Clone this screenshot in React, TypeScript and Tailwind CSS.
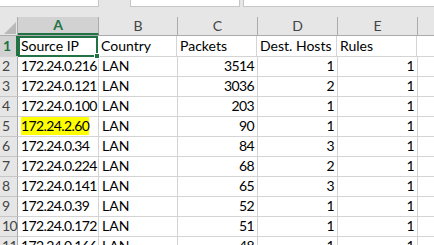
const rows: [string, string, number, number, number][] = [
  ['172.24.0.216', 'LAN', 3514, 1, 1],
  ['172.24.0.121', 'LAN', 3036, 2, 1],
  ['172.24.0.100', 'LAN', 203, 1, 1],
  ['172.24.2.60', 'LAN', 90, 1, 1],
  ['172.24.0.34', 'LAN', 84, 3, 1],
  ['172.24.0.224', 'LAN', 68, 2, 1],
  ['172.24.0.141', 'LAN', 65, 3, 1],
  ['172.24.0.39', 'LAN', 52, 1, 1],
  ['172.24.0.172', 'LAN', 51, 1, 1],
  ['172.24.0.166', 'LAN', 48, 1, 1],
];

const cols = [
  { letter: 'A', w: 'w-[81px]' },
  { letter: 'B', w: 'w-[79px]' },
  { letter: 'C', w: 'w-[80px]' },
  { letter: 'D', w: 'w-[80px]' },
  { letter: 'E', w: 'w-[80px]' },
];

function Cell({ w, right, children }: { w: string; right?: boolean; children?: React.ReactNode }) {
  return (
    <div
      className={`${w} shrink-0 h-full border-r border-[#d4d4d4] flex items-end pb-[1px] px-[3px] whitespace-nowrap overflow-visible ${
        right ? 'justify-end tracking-[-0.6px]' : ''
      }`}
    >
      {children}
    </div>
  );
}

export default function App() {
  return (
    <div className="w-[434px] h-[245px] overflow-hidden bg-[#e6e6e6] text-[14px] text-black font-['Lato',sans-serif] leading-[18px]">
      {/* formula bar bottom edge */}
      <div className="h-[7px] flex bg-white">
        <div className="w-[99px] border-r border-b border-[#c6c6c6]" />
        <div className="w-[31px] bg-[#e6e6e6]" />
        <div className="w-[110px] border-l border-r border-b border-[#c6c6c6]" />
        <div className="w-[3px] bg-[#e6e6e6]" />
        <div className="flex-1 border-l border-b border-[#c6c6c6]" />
      </div>
      <div className="h-[10px]" />

      {/* column headers */}
      <div className="h-[19px] flex border-b border-[#ababab] text-[#444]">
        <div className="w-[18px] shrink-0 relative border-r border-[#ababab]">
          <svg className="absolute right-[1px] bottom-[1px]" width="12" height="12" viewBox="0 0 12 12">
            <polygon points="12,0 12,12 0,12" fill="#b9b9b9" />
          </svg>
        </div>
        {cols.map((c) => (
          <div
            key={c.letter}
            className={`${c.w} shrink-0 flex items-center justify-center border-r border-[#ababab] ${
              c.letter === 'A' ? 'bg-[#d2d2d2] text-[#217346] font-bold border-b-2 border-b-[#217346]' : ''
            }`}
          >
            {c.letter}
          </div>
        ))}
        <div className="flex-1" />
      </div>

      {/* header row 1 */}
      <div className="h-[21px] flex bg-white border-b border-[#d4d4d4]">
        <div className="w-[18px] shrink-0 bg-[#d2d2d2] text-[#217346] font-bold flex items-end pb-[1px] pl-[3px] border-r-2 border-[#217346]">
          1
        </div>
        <div className="w-[80px] shrink-0 h-[21px] -mb-[1px] relative border-2 border-[#217346] flex items-end pb-[0px] px-[1px] z-10">
          Source IP
          <div className="absolute -right-[4px] -bottom-[4px] w-[6px] h-[6px] bg-[#217346] border border-white" />
        </div>
        <Cell w="w-[79px]">Country</Cell>
        <Cell w="w-[80px]">Packets</Cell>
        <Cell w="w-[80px]">Dest. Hosts</Cell>
        <Cell w="w-[80px]">Rules</Cell>
        <div className="flex-1" />
      </div>

      {rows.map((r, i) => (
        <div key={i} className="h-[20px] flex bg-white border-b border-[#d4d4d4]">
          <div className="w-[18px] shrink-0 bg-[#e6e6e6] text-[#444] flex items-end pb-[1px] pl-[2px] border-r border-[#ababab] border-b border-b-[#c6c6c6] -mb-[1px] tracking-[-0.5px]">
            {i + 2}
          </div>
          <Cell w="w-[81px]">
            {r[0] === '172.24.2.60' ? (
              <span className="bg-[#ffff00] tracking-[-0.6px]">{r[0]}</span>
            ) : (
              <span className="tracking-[-0.6px]">{r[0]}</span>
            )}
          </Cell>
          <Cell w="w-[79px]">{r[1]}</Cell>
          <Cell w="w-[80px]" right>{r[2]}</Cell>
          <Cell w="w-[80px]" right>{r[3]}</Cell>
          <Cell w="w-[80px]" right>{r[4]}</Cell>
          <div className="flex-1" />
        </div>
      ))}
    </div>
  );
}
